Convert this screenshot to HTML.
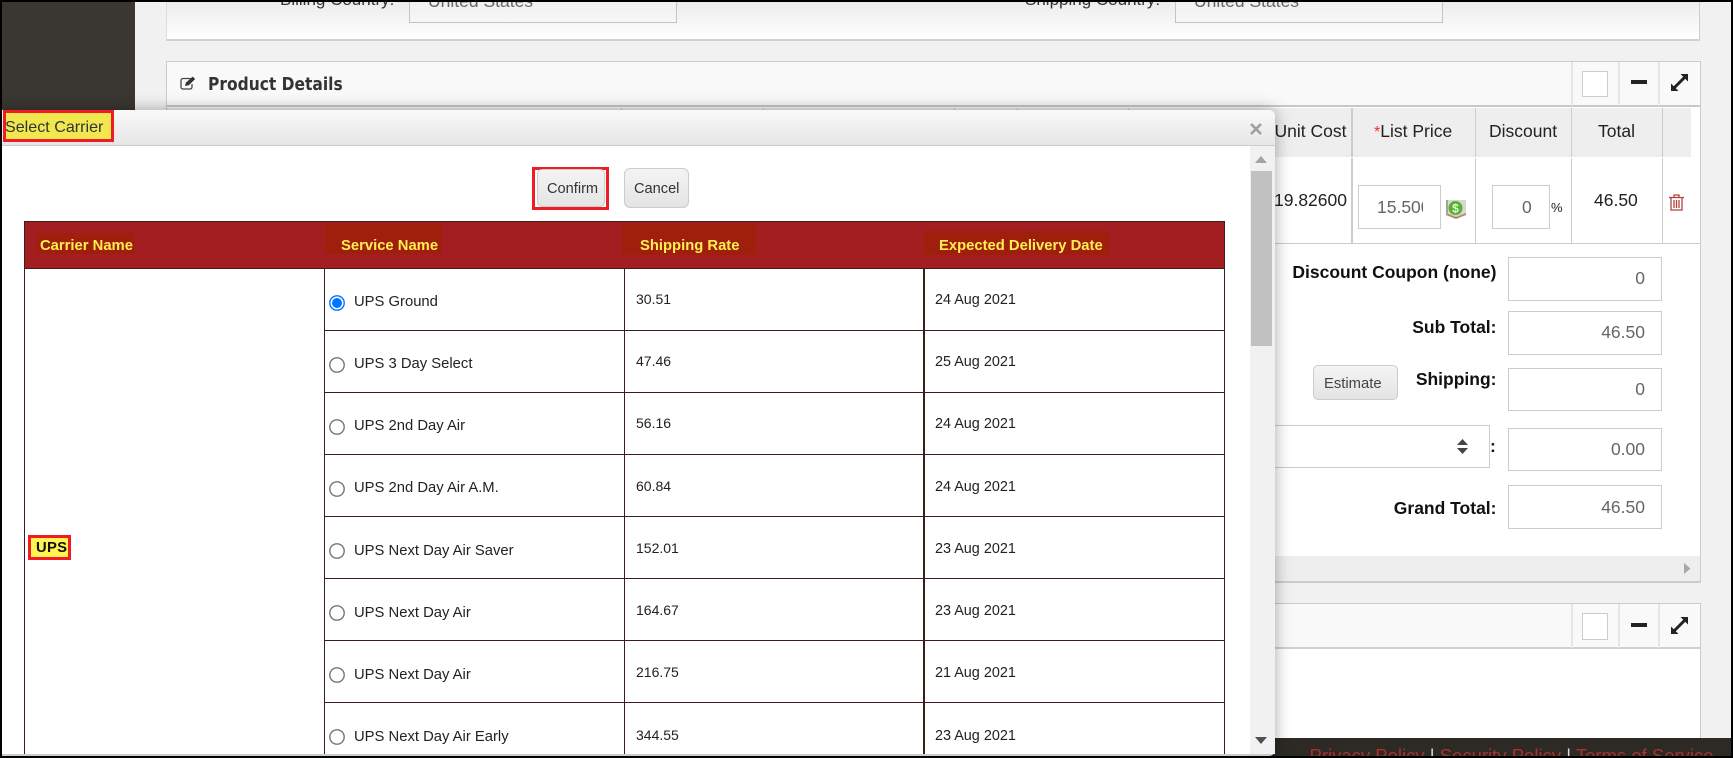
<!DOCTYPE html>
<html><head><meta charset="utf-8">
<style>
html,body{margin:0;padding:0}
body{width:1733px;height:758px;overflow:hidden;position:relative;background:#000;font-family:"Liberation Sans",sans-serif;color:#111}
div,span.t{position:absolute;box-sizing:border-box}
.t{position:absolute;white-space:nowrap;line-height:20px;height:20px}
.l{background:#3d1c1c}
.svc{font-size:14.8px;left:354px;color:#222}
.rate{font-size:14px;left:636px;color:#222}
.date{font-size:14.4px;left:935px;color:#222}
.h{font-size:14.8px;font-weight:bold;color:#fff04f;top:236px}
.hb{background:#a01e0c}
.box{background:#fff;border:1px solid #ccc}
.val{font-size:17.5px;color:#666;text-align:right;right:88px}
.lab{font-size:17.5px;font-weight:bold;color:#111;right:236.5px}
.th{font-size:17.5px;color:#222;top:121px}
.sep{background:#e6e6e6;width:2px}
svg{position:absolute;overflow:visible}
</style></head>
<body>
<div id="page" style="left:2px;top:2px;width:1729px;height:754px;background:#f1f1f1;overflow:hidden">
<div style="left:0;top:0;width:133px;height:754px;background:#3a3632"></div>
</div>

<!-- Panel 1 -->
<div style="left:166px;top:2px;width:1534px;height:39px;background:linear-gradient(#ececec,#fff);border-right:1px solid #ccc;border-left:1px solid #ddd;border-bottom:2px solid #d0d0d0;overflow:hidden">
<div class="box" style="left:242px;top:-10px;width:268px;height:31px;background:linear-gradient(#eee,#f6f6f6);border-color:#c4c4c4"></div>
<div class="box" style="left:1008px;top:-10px;width:268px;height:31px;background:linear-gradient(#eee,#f6f6f6);border-color:#c4c4c4"></div>
<span class="t" style="left:113px;top:-12px;font-size:17px;color:#333">Billing Country:</span>
<span class="t" style="left:261px;top:-11px;font-size:17.5px;color:#666">United States</span>
<span class="t" style="left:858px;top:-12px;font-size:17px;color:#333">Shipping Country:</span>
<span class="t" style="left:1027px;top:-11px;font-size:17.5px;color:#666">United States</span>
</div>

<!-- Panel 2 -->
<div style="left:166px;top:61px;width:1535px;height:522px;background:#fff;border:1px solid #ccc;border-bottom:2px solid #ccc"></div>
<div style="left:167px;top:62px;width:1533px;height:45px;background:#f9f9f9;border-bottom:2px solid #c8c8c8"></div>
<svg style="left:180px;top:76px" width="16" height="14" viewBox="0 0 16 14"><path d="M10.5 2.500H3a2 2 0 0 0-2 2V11a2 2 0 0 0 2 2h7a2 2 0 0 0 2-2V8" fill="none" stroke="#444" stroke-width="1.300"/><path d="M5 10l.8-3.200L12.600.6l2.600 2.400-6.400 6.200z" fill="#333"/></svg>
<span class="t" style="left:208px;top:75px;font-family:'DejaVu Sans',sans-serif;font-size:18px;font-weight:bold;color:#333;transform:scaleX(.86);transform-origin:0 50%">Product Details</span>
<div class="sep" style="left:1571px;top:62px;height:44px"></div>
<div class="sep" style="left:1618px;top:62px;height:44px"></div>
<div class="sep" style="left:1658px;top:62px;height:44px"></div>
<div class="box" style="left:1582px;top:71px;width:26px;height:26px"></div>
<div style="left:1631px;top:80px;width:16px;height:4px;background:#222"></div>
<svg style="left:1671px;top:74px" width="17" height="17" viewBox="0 0 17 17"><path d="M9.500 0H17v7.500zM0 9.500V17h7.500z" fill="#222"/><path d="M3 14L14 3" stroke="#222" stroke-width="3" fill="none"/></svg>

<!-- Product table -->
<div style="left:167px;top:108px;width:1524px;height:49px;background:#eee"></div>
<div style="left:1351px;top:108px;width:2px;height:135px;background:#ccc"></div>
<div style="left:1475px;top:108px;width:1px;height:135px;background:#ccc"></div>
<div style="left:1571px;top:108px;width:1px;height:135px;background:#ccc"></div>
<div style="left:1662px;top:108px;width:1px;height:135px;background:#ccc"></div>
<div style="left:1351px;top:157px;width:340px;height:1px;background:#fff"></div>
<div style="left:1271px;top:243px;width:429px;height:1px;background:#ccc"></div>
<div style="left:763px;top:108px;width:1px;height:3px;background:#ccc"></div>
<div style="left:954px;top:108px;width:1px;height:3px;background:#ccc"></div>
<div style="left:1017px;top:108px;width:1px;height:3px;background:#ccc"></div>
<div style="left:1128px;top:108px;width:1px;height:3px;background:#ccc"></div>
<div style="left:621px;top:108px;width:1px;height:3px;background:#ccc"></div>
<span class="t th" style="left:1274.5px">Unit Cost</span>
<span class="t th" style="left:1374px"><span style="color:#e33;font-size:16px">*</span>List Price</span>
<span class="t th" style="left:1489px">Discount</span>
<span class="t th" style="left:1598px">Total</span>
<div style="left:1275px;top:190px;width:72px;height:20px;overflow:hidden"><span class="t" style="right:0;top:0;font-size:17.5px;color:#222">19.82600</span></div>
<div class="box" style="left:1358px;top:185px;width:83px;height:44px;overflow:hidden"><span class="t" style="left:18px;top:11px;font-size:17.5px;color:#666;width:46px;overflow:hidden">15.500</span></div>
<svg style="left:1445px;top:198px" width="22" height="22" viewBox="0 0 22 22"><path d="M1 2h20v15l-10 4-10-4z" fill="#d3dad3"/><path d="M1 15l10 4 10-4v2l-10 4-10-4z" fill="#b58a66"/><path d="M1 2h2v13H1z" fill="#a9a08f"/><circle cx="10.500" cy="10" r="7" fill="#5cb030"/><text x="10.500" y="14.500" font-size="12" font-weight="bold" fill="#e8f8e0" text-anchor="middle" font-family="Liberation Sans">$</text></svg>
<div class="box" style="left:1492px;top:185px;width:58px;height:44px"></div>
<span class="t" style="left:1522px;top:197px;font-size:17.5px;color:#666">0</span>
<span class="t" style="left:1551px;top:198px;font-size:13px;color:#222">%</span>
<span class="t" style="left:1594px;top:190px;font-size:17.5px;color:#222">46.50</span>
<svg style="left:1669px;top:194px" width="15" height="17" viewBox="0 0 15 17"><path d="M0 3.500h15M5 3.500V1h5v2.500M2 3.500V16h11V3.500M5 6v8M7.500 6v8M10 6v8" fill="none" stroke="#b0443a" stroke-width="1.300"/></svg>

<!-- Summary -->
<span class="t lab" style="top:262px">Discount Coupon (none)</span>
<div class="box" style="left:1508px;top:257px;width:154px;height:44px"></div>
<span class="t val" style="top:268px">0</span>
<span class="t lab" style="top:317px">Sub Total:</span>
<div class="box" style="left:1508px;top:311px;width:154px;height:44px"></div>
<span class="t val" style="top:322px">46.50</span>
<div style="left:1313px;top:365px;width:85px;height:35px;border:1px solid #ccc;border-radius:5px;background:linear-gradient(#f4f4f4,#e4e4e4)"></div>
<span class="t" style="left:1324px;top:374px;font-size:14.8px;color:#444">Estimate</span>
<span class="t lab" style="top:369px">Shipping:</span>
<div class="box" style="left:1508px;top:368px;width:154px;height:43px"></div>
<span class="t val" style="top:379px">0</span>
<div class="box" style="left:1200px;top:425px;width:290px;height:43px"></div>
<svg style="left:1457px;top:439px" width="11" height="15" viewBox="0 0 11 15"><path d="M5.500 0L11 6H0zM0 9h11l-5.500 6z" fill="#444"/></svg>
<span class="t lab" style="top:436px;right:auto;left:1490px">:</span>
<div class="box" style="left:1508px;top:428px;width:154px;height:43px"></div>
<span class="t val" style="top:439px">0.00</span>
<span class="t lab" style="top:498px">Grand Total:</span>
<div class="box" style="left:1508px;top:485px;width:154px;height:44px"></div>
<span class="t val" style="top:497px">46.50</span>
<div style="left:167px;top:556px;width:1533px;height:25px;background:#eee"></div>
<svg style="left:1684px;top:563px" width="7" height="11" viewBox="0 0 7 11"><path d="M0 0l6.500 5.500L0 11z" fill="#a8a8a8"/></svg>

<!-- Panel 3 -->
<div style="left:166px;top:603px;width:1535px;height:140px;background:#fff;border:1px solid #ccc;border-bottom:0"></div>
<div style="left:167px;top:604px;width:1533px;height:45px;background:#f9f9f9;border-bottom:2px solid #d0d0d0"></div>
<div class="sep" style="left:1571px;top:604px;height:44px"></div>
<div class="sep" style="left:1618px;top:604px;height:44px"></div>
<div class="sep" style="left:1658px;top:604px;height:44px"></div>
<div class="box" style="left:1582px;top:613px;width:26px;height:27px"></div>
<div style="left:1631px;top:623px;width:16px;height:4px;background:#222"></div>
<svg style="left:1671px;top:617px" width="17" height="17" viewBox="0 0 17 17"><path d="M9.500 0H17v7.500zM0 9.500V17h7.500z" fill="#222"/><path d="M3 14L14 3" stroke="#222" stroke-width="3" fill="none"/></svg>

<!-- Footer -->
<div style="left:2px;top:738px;width:1729px;height:18px;background:#2d2925;overflow:hidden">
<span class="t" style="left:1307.5px;top:8px;font-size:18.5px;color:#a8322c;line-height:20px">Privacy Policy <span style="color:#ddd">|</span> Security Policy <span style="color:#ddd">|</span> Terms of Service</span>
</div>

<!-- Dialog -->
<div id="dlg" style="left:2px;top:110px;width:1273px;height:646px;background:#fff;border-radius:0 6px 6px 0;box-shadow:0 0 16px rgba(0,0,0,.35);overflow:hidden;border-bottom:2px solid #ccc">
<div style="left:0;top:0;width:1273px;height:36px;background:linear-gradient(#f9f9f9,#e6e6e6);border-bottom:1px solid #ccc"></div>
</div>
<div style="left:154px;top:754px;width:460px;height:2px;overflow:hidden"><span class="t" style="left:0;top:1px;font-size:17px;color:#666">Copyright 2021 All Rights Reserved. All other trademarks are property</span></div>
<div style="left:3px;top:110px;width:111px;height:32px;background:#f0e84e;border:3px solid #ee1c25"></div>
<span class="t" style="left:5px;top:117px;font-size:16.100px;color:#333">Select Carrier</span>
<svg style="left:1250px;top:123px" width="12" height="12" viewBox="0 0 12 12"><path d="M1 1l10 10M11 1L1 11" stroke="#a0a0a0" stroke-width="2.600" fill="none"/></svg>

<!-- Scrollbar -->
<div style="left:1250px;top:146px;width:25px;height:608px;background:#f1f1f1"></div>
<div style="left:1251px;top:171px;width:21px;height:175px;background:#c1c1c1"></div>
<svg style="left:1255px;top:156px" width="12" height="7" viewBox="0 0 12 7"><path d="M6 0l6 7H0z" fill="#a3a3a3"/></svg>
<svg style="left:1255px;top:737px" width="12" height="7" viewBox="0 0 12 7"><path d="M0 0h12L6 7z" fill="#505050"/></svg>

<!-- Buttons -->
<div style="left:532px;top:167px;width:77px;height:43px;border:3px solid #ee1c25"></div>
<div style="left:537px;top:169px;width:68px;height:38px;background:linear-gradient(#f4f4f4,#e4e4e4);border:1px solid #ccc;border-radius:5px"></div>
<span class="t" style="left:547px;top:179px;font-size:14.600px;color:#333">Confirm</span>
<div style="left:624px;top:168px;width:65px;height:40px;background:linear-gradient(#f4f4f4,#e4e4e4);border:1px solid #ccc;border-radius:6px"></div>
<span class="t" style="left:634px;top:179px;font-size:14.600px;color:#333">Cancel</span>

<!-- Carrier table -->
<div style="left:24px;top:221px;width:1201px;height:48px;background:#a31e21"></div>
<div class="hb" style="left:36px;top:233px;width:99px;height:21px"></div>
<div class="hb" style="left:325px;top:223px;width:117px;height:31px"></div>
<div class="hb" style="left:622px;top:223px;width:134px;height:32px"></div>
<div class="hb" style="left:924px;top:231px;width:185px;height:24px"></div>
<span class="t h" style="left:40px">Carrier Name</span>
<span class="t h" style="left:341px">Service Name</span>
<span class="t h" style="left:640px">Shipping Rate</span>
<span class="t h" style="left:939px">Expected Delivery Date</span>

<div class="l" style="left:24px;top:221px;width:1201px;height:1px"></div>
<div class="l" style="left:24px;top:221px;width:1px;height:533px"></div>
<div class="l" style="left:1224px;top:221px;width:1px;height:533px"></div>
<div class="l" style="left:24px;top:268px;width:1201px;height:1px"></div>
<div class="l" style="left:324px;top:269px;width:1px;height:485px"></div>
<div class="l" style="left:624px;top:269px;width:1px;height:485px"></div>
<div class="l" style="left:923px;top:269px;width:2px;height:485px"></div>
<div class="l" style="left:324px;top:330px;width:901px;height:1px"></div>
<div class="l" style="left:324px;top:392px;width:901px;height:1px"></div>
<div class="l" style="left:324px;top:454px;width:901px;height:1px"></div>
<div class="l" style="left:324px;top:516px;width:901px;height:1px"></div>
<div class="l" style="left:324px;top:578px;width:901px;height:1px"></div>
<div class="l" style="left:324px;top:640px;width:901px;height:1px"></div>
<div class="l" style="left:324px;top:702px;width:901px;height:1px"></div>

<div style="left:28px;top:535px;width:43px;height:25px;background:#fff450;border:3px solid #ee1c25"></div>
<span class="t" style="left:36px;top:538px;font-size:14.8px;font-weight:bold;color:#111;letter-spacing:.3px">UPS</span>

<svg style="left:329px;top:295px" width="16" height="16" viewBox="0 0 16 16"><circle cx="8" cy="8" r="7.200" fill="#fff" stroke="#0075ff" stroke-width="1.400"/><circle cx="8" cy="8" r="5" fill="#0075ff"/></svg>
<svg style="left:329px;top:357px" width="16" height="16" viewBox="0 0 16 16"><circle cx="8" cy="8" r="7.200" fill="#fff" stroke="#767676" stroke-width="1.400"/></svg>
<svg style="left:329px;top:419px" width="16" height="16" viewBox="0 0 16 16"><circle cx="8" cy="8" r="7.200" fill="#fff" stroke="#767676" stroke-width="1.400"/></svg>
<svg style="left:329px;top:481px" width="16" height="16" viewBox="0 0 16 16"><circle cx="8" cy="8" r="7.200" fill="#fff" stroke="#767676" stroke-width="1.400"/></svg>
<svg style="left:329px;top:543px" width="16" height="16" viewBox="0 0 16 16"><circle cx="8" cy="8" r="7.200" fill="#fff" stroke="#767676" stroke-width="1.400"/></svg>
<svg style="left:329px;top:605px" width="16" height="16" viewBox="0 0 16 16"><circle cx="8" cy="8" r="7.200" fill="#fff" stroke="#767676" stroke-width="1.400"/></svg>
<svg style="left:329px;top:667px" width="16" height="16" viewBox="0 0 16 16"><circle cx="8" cy="8" r="7.200" fill="#fff" stroke="#767676" stroke-width="1.400"/></svg>
<svg style="left:329px;top:729px" width="16" height="16" viewBox="0 0 16 16"><circle cx="8" cy="8" r="7.200" fill="#fff" stroke="#767676" stroke-width="1.400"/></svg>

<span class="t svc" style="top:292px">UPS Ground</span>
<span class="t svc" style="top:354px">UPS 3 Day Select</span>
<span class="t svc" style="top:416px">UPS 2nd Day Air</span>
<span class="t svc" style="top:478px">UPS 2nd Day Air A.M.</span>
<span class="t svc" style="top:541px">UPS Next Day Air Saver</span>
<span class="t svc" style="top:603px">UPS Next Day Air</span>
<span class="t svc" style="top:665px">UPS Next Day Air</span>
<span class="t svc" style="top:727px">UPS Next Day Air Early</span>

<span class="t rate" style="top:289px">30.51</span>
<span class="t rate" style="top:351px">47.46</span>
<span class="t rate" style="top:413px">56.16</span>
<span class="t rate" style="top:476px">60.84</span>
<span class="t rate" style="top:538px">152.01</span>
<span class="t rate" style="top:600px">164.67</span>
<span class="t rate" style="top:662px">216.75</span>
<span class="t rate" style="top:725px">344.55</span>

<span class="t date" style="top:290px">24 Aug 2021</span>
<span class="t date" style="top:352px">25 Aug 2021</span>
<span class="t date" style="top:414px">24 Aug 2021</span>
<span class="t date" style="top:477px">24 Aug 2021</span>
<span class="t date" style="top:539px">23 Aug 2021</span>
<span class="t date" style="top:601px">23 Aug 2021</span>
<span class="t date" style="top:663px">21 Aug 2021</span>
<span class="t date" style="top:726px">23 Aug 2021</span>

<!-- Frame -->
<div style="left:0;top:0;width:1733px;height:2px;background:#000"></div>
<div style="left:0;top:756px;width:1733px;height:2px;background:#000"></div>
<div style="left:0;top:0;width:2px;height:758px;background:#000"></div>
<div style="left:1731px;top:0;width:2px;height:758px;background:#000"></div>
</body></html>
